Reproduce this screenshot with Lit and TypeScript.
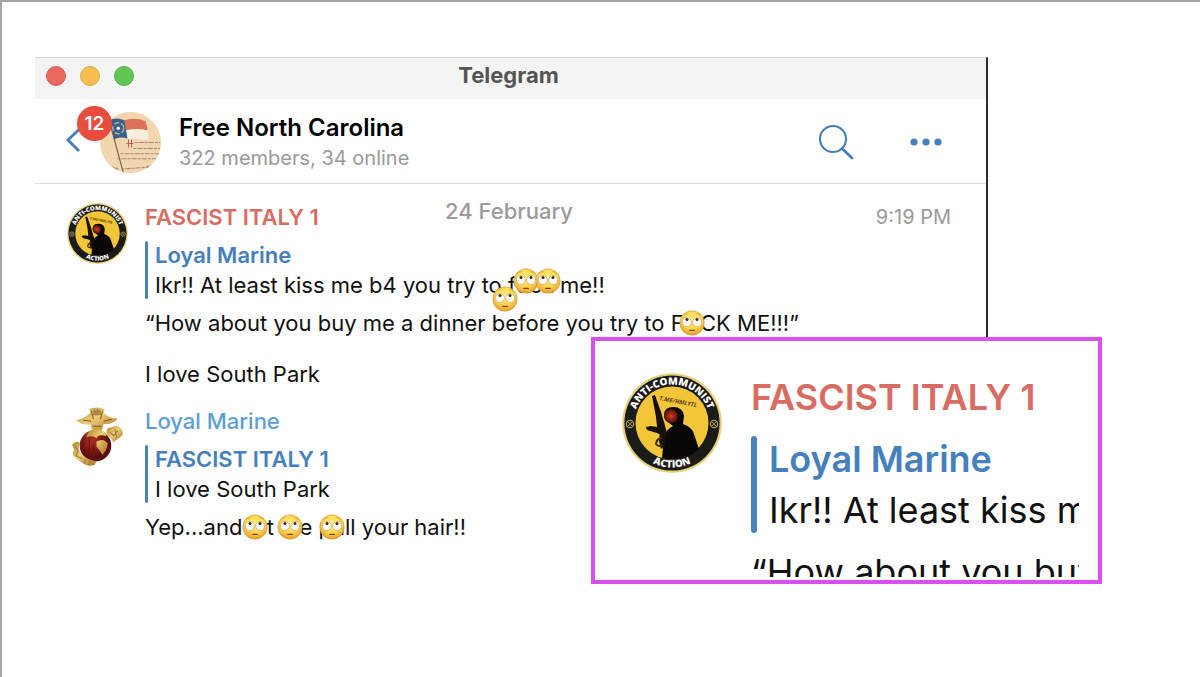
import { LitElement, html, css, svg } from "lit";
import { customElement } from "lit/decorators.js";

const rollEyes = html`<svg class="emoji-art" viewBox="0 0 26 26" aria-hidden="true">
  <defs>
    <radialGradient id="face" cx="50%" cy="35%" r="66%">
      <stop offset="0" stop-color="#fff07a" />
      <stop offset="0.6" stop-color="#fbd34a" />
      <stop offset="1" stop-color="#e39a2c" />
    </radialGradient>
  </defs>
  <circle cx="13" cy="13" r="12.2" fill="url(#face)" stroke="#d9973a" stroke-width=".6" />
  <circle cx="7.8" cy="12" r="4.5" fill="#fff" stroke="#b9a070" stroke-width=".6" />
  <circle cx="18.2" cy="12" r="4.5" fill="#fff" stroke="#b9a070" stroke-width=".6" />
  <circle cx="8" cy="9.4" r="1.5" fill="#3c2717" />
  <circle cx="18" cy="9.4" r="1.5" fill="#3c2717" />
  <path d="M3.8 5.6Q5.6 3.6 8.2 3.6M17.8 3.6Q20.4 3.6 22.2 5.6" fill="none" stroke="#d39a36" stroke-width=".7" stroke-linecap="round" />
  <path d="M10.8 20.4h4.6" stroke="#7a4a14" stroke-width="1.2" stroke-linecap="round" />
</svg>`;

const badgeAvatar = html`<svg class="avatar" viewBox="0 0 100 100" role="img" aria-label="Anti-Communist Action">
  <defs>
    <path id="arc-top" d="M11.5 50A38.5 38.5 0 0 1 88.5 50" />
    <path id="arc-bottom" d="M5.5 50A44.5 44.5 0 0 0 94.5 50" />
    <radialGradient id="mask"><stop offset="0" stop-color="#d8401f" /><stop offset="1" stop-color="#4e0e08" /></radialGradient>
  </defs>
  <circle cx="50" cy="50" r="49.8" fill="#e5d278" />
  <circle cx="50" cy="50" r="47.6" fill="#1b1b1a" />
  <circle cx="50" cy="50" r="36.5" fill="#f3c63a" />
  <path d="M40 85L41 74L43 62Q45 56 51 53L47 50Q42 47 42 41Q43 34 51 34Q61 34 62 43L61 51Q70 54 72 61L77 76Q66 87 50 86.5Q44 86.5 40 85Z" fill="#090706" />
  <ellipse cx="49" cy="43" rx="7" ry="7" fill="url(#mask)" />
  <path d="M30 23L33 22L39 39L42 49L45 60L43 64L35 60L28 58Q24 57 24 54L29 53L35 54L34 44Z" fill="#160f08" />
  <path d="M38 58L44 59L43 73L39 76L37 68Z" fill="#160f08" />
  <path d="M40 65Q34 66 34 71Q37 75 41 71" fill="none" stroke="#3a2a0d" stroke-width="2" />
  <text x="37" y="27" font-size="6" transform="rotate(11 37 27)" class="seal-note">T.ME/HMLYTL</text>
  <circle cx="8" cy="51" r="3.6" fill="none" stroke="#a9955c" stroke-width="1.4" />
  <path d="M6 49l4 4M10 49l-4 4" stroke="#a9955c" />
  <circle cx="92" cy="51" r="3.6" fill="none" stroke="#a9955c" stroke-width="1.4" />
  <path d="M90 49l4 4M94 49l-4 4" stroke="#a9955c" />
  <text class="seal-text" font-size="10"><textPath href="#arc-top" startOffset="50%" text-anchor="middle">ANTI-COMMUNIST</textPath></text>
  <text class="seal-text" font-size="10"><textPath href="#arc-bottom" startOffset="50%" text-anchor="middle">ACTION</textPath></text>
</svg>`;

const marineAvatar = html`<svg class="avatar" viewBox="0 0 60 60" role="img" aria-label="Eagle, globe and anchor">
  <defs>
    <linearGradient id="gold" x1="0" x2="1" y2="1"><stop offset="0" stop-color="#b58528" /><stop offset=".45" stop-color="#eccb78" /><stop offset="1" stop-color="#a5731d" /></linearGradient>
    <radialGradient id="globe" cx=".4" cy=".35"><stop offset="0" stop-color="#b02a22" /><stop offset="1" stop-color="#5c100d" /></radialGradient>
  </defs>
  <path d="M9 13Q16 12 23 6L22 2Q29 -1 37 2L36 6Q43 12 50 11Q46 17 36 17L34 24H25L23 17Q14 18 9 13Z" fill="url(#gold)" />
  <path d="M24 4l2 8M30 2v5M35 4l-2 8M16 13l8 1M36 14l8-2M25 19h9" fill="none" stroke="#80591f" />
  <path d="M26 3h7l1 5h-9Z" fill="#a98b45" />
  <circle cx="28" cy="38" r="15.5" fill="url(#globe)" />
  <path d="M16 31v15M22 32v20M26 38v14" stroke="#6d130f" />
  <path d="M19 30Q20 22 30 22Q38 23 39 29Q31 26 29 31Q25 27 19 30ZM29 34Q36 30 40 36Q39 43 35 47Q32 42 29 39Z" fill="url(#gold)" />
  <path d="M39 26Q38 20 44 20Q49 17 53 21Q57 27 52 30L45 35Q45 31 41 30Z" fill="url(#gold)" />
  <path d="M42 25l4 3 4-5M47 22l2 8" fill="none" stroke="#9a7430" />
  <path d="M5 37Q10 32 13 36Q9 43 16 48Q22 53 29 53L27 57Q20 59 15 55L8 50Q4 46 7 42Z" fill="url(#gold)" />
  <path d="M8 39l3 4-2 5 6 3M18 51l-1 5M23 53l-2 4" fill="none" stroke="#9a7430" />
</svg>`;

const flagAvatar = html`<svg class="avatar" viewBox="0 0 60 60" role="img" aria-label="Free North Carolina">
  <defs><clipPath id="round"><circle cx="30" cy="30" r="30" /></clipPath></defs>
  <g clip-path="url(#round)">
    <path d="M0 0h60v60H0z" fill="#f2d6b0" />
    <path d="M24 8Q35 5 45 9L47 18Q36 16 25 18Z" fill="#dc7058" />
    <path d="M25 18Q36 16 47 18L48 28Q36 25 27 27Z" fill="#f7eee1" />
    <path d="M9 8Q16 5 24 8L27 26Q19 24 14 27Z" fill="#385f91" />
    <circle cx="18" cy="16" r="5.5" fill="none" stroke="#bab981" stroke-dasharray="5 2" stroke-width="1.4" />
    <circle cx="18" cy="16" r="1.7" fill="#f7f2e3" />
    <path d="M10 12L23 60" stroke="#765a43" stroke-width="1.1" />
    <path d="M28 27v8M31 27v8M26 31h7" stroke="#bf6450" fill="none" />
    <path d="M34 30h25M33 36h27M20 41h38M17 46h38M21 56l33-2" stroke="#a08a74" stroke-dasharray="3 1 5 1" />
    <path d="M5 48q7 7 13 7v6H7M45 53l4 3 4-4" fill="#b09a6e" />
  </g>
</svg>`;

@customElement("app-root")
export class AppRoot extends LitElement {
  static styles = css`
    :host {
      display: block;
      font-family: Inter, "Liberation Sans", sans-serif;
      font-size: 22px;
      line-height: 28px;
      color: #111;
    }
    * { box-sizing: border-box; }
    p, h1, h2 { margin: 0; font: inherit; }
    .page {
      position: relative;
      min-height: 100vh;
      padding: 55px 212px 0 33px;
      background: #fefefe;
      border-top: 2px solid #a3a3a3;
      border-left: 2px solid #a3a3a3;
    }
    .window { border-right: 2px solid #2b2b2b; border-top: 1px solid #d6d6d6; height: 460px; }
    .titlebar {
      display: grid;
      grid-template-columns: 1fr auto 1fr;
      align-items: start;
      height: 41px;
      padding: 3px 15px 0 11px;
      background: #f4f4f4;
    }
    .lights { display: flex; gap: 14px; padding-top: 5px; }
    .light { width: 20px; height: 20px; padding: 0; border: 1px solid #d8594f; border-radius: 50%; background: #ec695f; }
    .light.min { background: #f5bf4f; border-color: #dfaa45; }
    .light.zoom { background: #61c554; border-color: #54b148; }
    .title { font-weight: 700; color: #555; }
    .header { display: flex; align-items: center; height: 85px; padding: 2px 44px 0 31px; border-bottom: 1px solid #dfdfdf; }
    .back { position: relative; width: 34px; height: 62px; padding: 0; border: 0; background: none; }
    .back svg { position: absolute; left: 0; top: 16px; width: 16px; height: 26px; }
    .count {
      position: absolute;
      left: 11px;
      top: -5px;
      width: 35px;
      height: 35px;
      border-radius: 50%;
      background: #e74c3c;
      color: #fff;
      font: 600 19px/35px Inter, sans-serif;
    }
    .avatar { display: block; flex: none; width: 61px; height: 61px; }
    .chat { flex: 1; padding: 2px 0 0 18px; }
    .chat h1 { font-size: 24px; line-height: 30px; font-weight: 600; color: #000; }
    .chat p { font-size: 20px; line-height: 30px; color: #9a9a9a; }
    .tools { display: flex; align-items: center; gap: 56px; }
    .tool { display: block; padding: 0; border: 0; background: none; }
    .tool svg { display: block; }
    .log { position: relative; padding: 19px 35px 0 32px; }
    .date { position: absolute; top: 13px; left: 0; right: 3px; text-align: center; font-weight: 500; color: #9b9b9b; }
    .message { display: grid; grid-template-columns: 61px 1fr; column-gap: 17px; margin-bottom: 19px; }
    .line { display: flex; justify-content: space-between; }
    .name { font-weight: 500; color: #5b9fd9; }
    .name.red { font-weight: 600; color: #d96c62; }
    .time { font-size: 20px; color: #9b9b9b; }
    .quote { position: relative; display: grid; row-gap: 2px; margin: 10px 0; padding-left: 10px; }
    .quote::before { content: ""; position: absolute; left: 0; top: 0; bottom: 0; width: 3px; border-radius: 2px; background: #4a82bd; }
    .quote .name { font-weight: 600; color: #4580bd; }
    .text { white-space: nowrap; }
    .text + .text { margin-top: 23px; }
    .hidden { position: relative; }
    .emoji { position: absolute; left: 50%; top: 50%; width: 26px; height: 26px; margin: -13px 0 0 -13px; z-index: 1; }
    .emoji.left { margin-left: -18px; margin-top: -17px; }
    .emoji.right { margin-left: 4px; margin-top: -17px; }
    .emoji.low { margin-left: -39px; margin-top: 1px; }
    .emoji-art { display: block; width: 26px; height: 26px; }
    .callout {
      position: absolute;
      z-index: 2;
      top: 335px;
      right: 98px;
      width: 511px;
      height: 247px;
      border: 4px solid #d94ff0;
      background: #fefefe;
      padding: 32px 19px 0 27px;
      font-size: 36px;
      line-height: 46px;
      overflow: hidden;
    }
    .callout .message { grid-template-columns: 100px 1fr; column-gap: 29px; overflow: hidden; height: 204px; margin: 0; }
    .callout .avatar { width: 100px; height: 100px; }
    .callout .quote { margin: 16px 0; padding-left: 18px; row-gap: 5px; }
    .callout .quote::before { width: 6px; border-radius: 3px; }
    .callout h2 { padding-top: 1px; }
    .seal-text { font-family: "Open Sans", sans-serif; font-weight: 800; fill: #fff; }
    .seal-note { font-family: "Open Sans", sans-serif; font-weight: 700; font-style: italic; fill: #58420e; }
  `;

  private cover(word: string, kinds: string[] = [""]) {
    return html`<span class="hidden">${word}${kinds.map((k) => html`<span class="emoji ${k}">${rollEyes}</span>`)}</span>`;
  }

  render() {
    return html`<main class="page">
      <section class="window">
        <div class="titlebar">
          <div class="lights">
            <button class="light" aria-label="Close"></button>
            <button class="light min" aria-label="Minimize"></button>
            <button class="light zoom" aria-label="Zoom"></button>
          </div>
          <div class="title">Telegram</div>
        </div>
        <header class="header">
          <button class="back" aria-label="Back, 12 unread">
            <svg viewBox="0 0 16 26"><path d="M13.5 2L2 13L13 24" fill="none" stroke="#4580bd" stroke-width="2.8" /></svg>
            <span class="count">12</span>
          </button>
          ${flagAvatar}
          <div class="chat">
            <h1>Free North Carolina</h1>
            <p>322 members, 34 online</p>
          </div>
          <div class="tools">
            <button class="tool" aria-label="Search">
              <svg width="36" height="36" viewBox="0 0 36 36" fill="none" stroke="#4580bd">
                <circle cx="15" cy="15" r="13" stroke-width="2.1" /><path d="M24.2 24.6L34 34" stroke-width="2.8" stroke-linecap="round" />
              </svg>
            </button>
            <button class="tool" aria-label="More">
              <svg width="32" height="8" viewBox="0 0 32 8" fill="#4580bd">
                ${[4, 16, 28].map((x) => svg`<circle cx=${x} cy="4" r="3.6" />`)}
              </svg>
            </button>
          </div>
        </header>
        <div class="log">
          <div class="date">24 February</div>
          <article class="message">
            ${badgeAvatar}
            <div>
              <div class="line"><h2 class="name red">FASCIST ITALY 1</h2><time class="time">9:19 PM</time></div>
              <div class="quote">
                <p class="name">Loyal Marine</p>
                <p class="text">Ikr!! At least kiss me b4 you try to ${this.cover("fuck", ["low", "left", "right"])} me!!</p>
              </div>
              <p class="text">“How about you buy me a dinner before you try to F${this.cover("U")}CK ME!!!”</p>
              <p class="text">I love South Park</p>
            </div>
          </article>
          <article class="message">
            ${marineAvatar}
            <div>
              <h2 class="name">Loyal Marine</h2>
              <div class="quote">
                <p class="name">FASCIST ITALY 1</p>
                <p class="text">I love South Park</p>
              </div>
              <p class="text">Yep...and${this.cover(" le")}t ${this.cover("m")}e ${this.cover("pu")}ll your hair!!</p>
            </div>
          </article>
        </div>
      </section>
      <aside class="callout">
        <article class="message">
          ${badgeAvatar}
          <div>
            <h2 class="name red">FASCIST ITALY 1</h2>
            <div class="quote">
              <p class="name">Loyal Marine</p>
              <p class="text">Ikr!! At least kiss m</p>
            </div>
            <p class="text">“How about you buy</p>
          </div>
        </article>
      </aside>
    </main>`;
  }
}
